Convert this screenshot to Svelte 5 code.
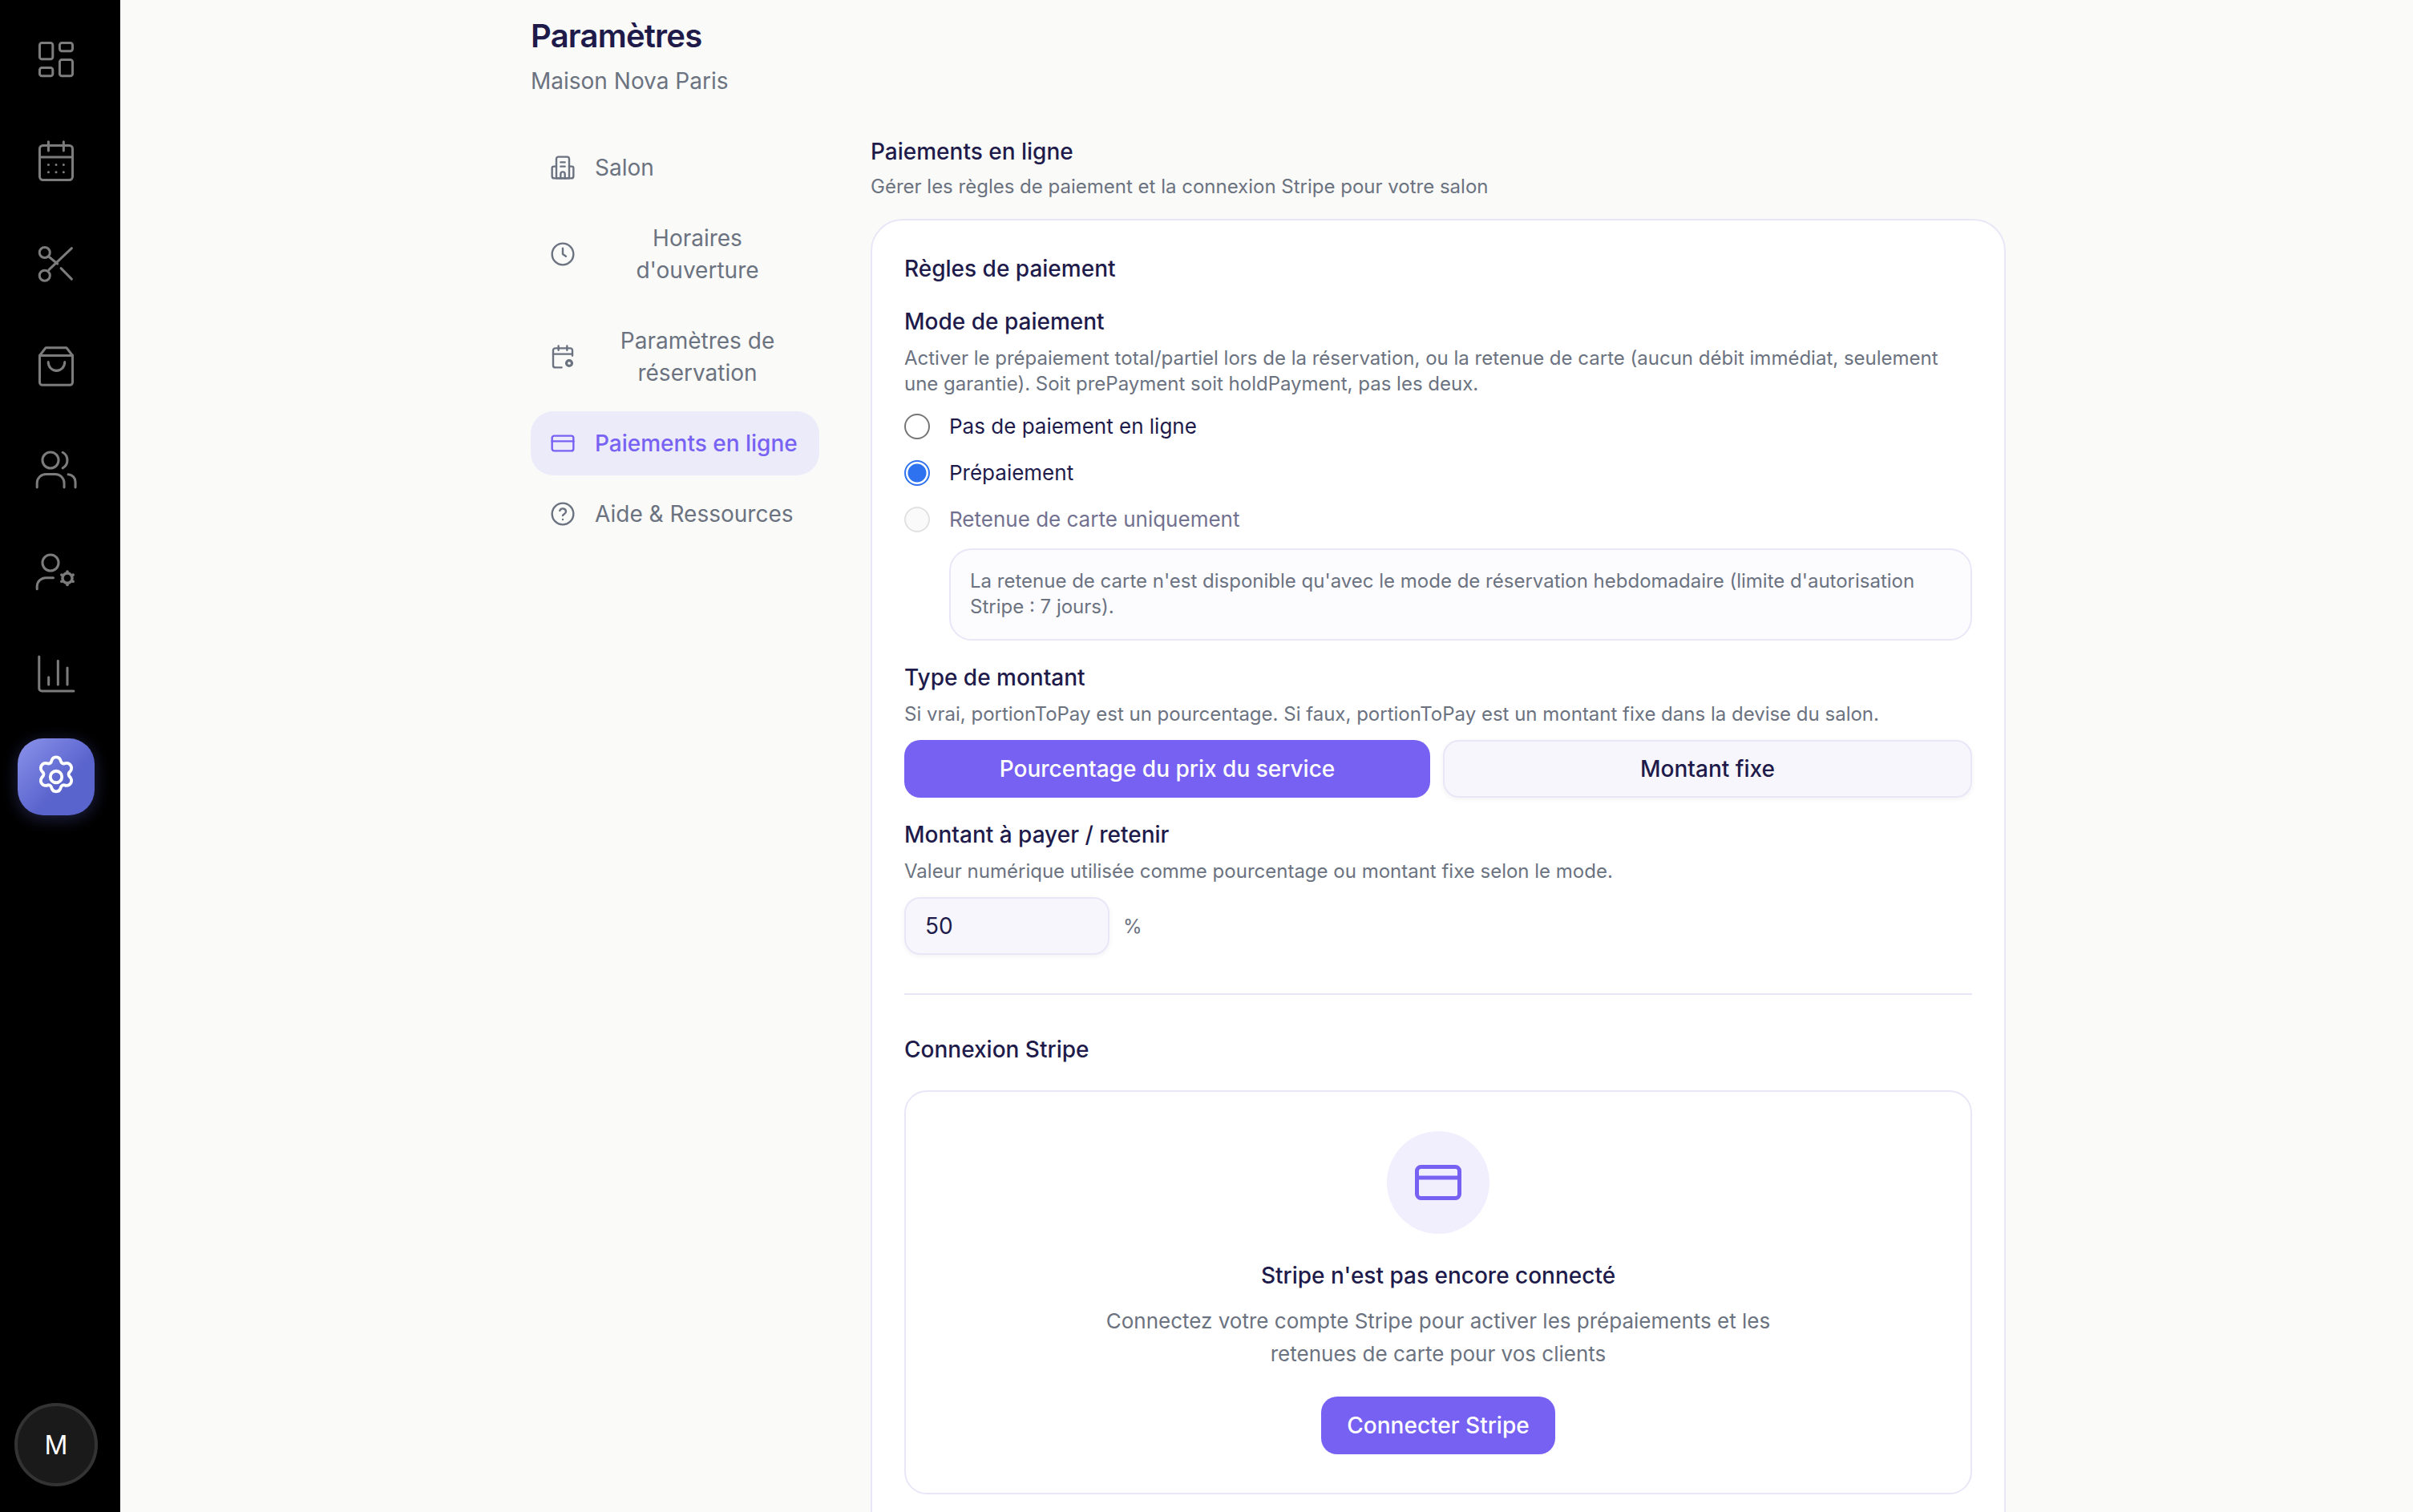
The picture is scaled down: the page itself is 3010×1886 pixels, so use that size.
<script>
  const railIcons = ["grid", "calendar", "scissors", "bag", "users", "usercog", "chart"];

  const navItems = [
    { id: "salon", label: "Salon" },
    { id: "clock", label: "Horaires d'ouverture" },
    { id: "calcog", label: "Paramètres de réservation" },
    { id: "card", label: "Paiements en ligne", active: true },
    { id: "help", label: "Aide & Ressources" }
  ];

  const radios = [
    { label: "Pas de paiement en ligne" },
    { label: "Prépaiement", checked: true },
    { label: "Retenue de carte uniquement", disabled: true }
  ];

  const cogAngles = [0, 60, 120, 180, 240, 300];
</script>

{#snippet railIcon(name)}
  <svg viewBox="0 0 24 24" width="56" height="56" fill="none" stroke="currentColor" stroke-width="1.3" stroke-linecap="round" stroke-linejoin="round">
    {#if name === "grid"}
      <rect x="3.2" y="3.6" width="7" height="8.7" rx="1.2" />
      <rect x="13.9" y="3.6" width="6.900" height="4.400" rx="1.2" />
      <rect x="3.2" y="16.900" width="7" height="4.400" rx="1.2" />
      <rect x="13.9" y="12.600" width="6.900" height="8.700" rx="1.2" />
    {:else if name === "calendar"}
      <rect x="3.2" y="3.600" width="17.600" height="18.500" rx="1.800" />
      <path d="M3.200 9.900h17.600M7.900 1.600v4.800M16 1.600v4.800" />
      <path d="M7.900 13.900h.01M12 13.900h.01M16 13.900h.01M7.900 17.900h.01M12 17.900h.01M16 17.900h.01" />
    {:else if name === "scissors"}
      <circle cx="5.900" cy="6" r="2.800" />
      <circle cx="5.900" cy="18.300" r="2.800" />
      <path d="M8.200 15.200 20.300 3.700M8.200 8.300l4.500 3.700M14.600 14.400l5.700 5.800" />
    {:else if name === "bag"}
      <path d="M3.200 6.200v14.300a1.500 1.500 0 0 0 1.500 1.500h14.600a1.500 1.500 0 0 0 1.500-1.500V6.200L17.500 2h-11z" />
      <path d="M3.200 6.200h17.600M7.800 9.700a4.400 4.600 0 0 0 8.800 0" />
    {:else if name === "users"}
      <circle cx="9" cy="7.300" r="4.300" />
      <path d="M1.800 21.800v-2.300a4.700 4.700 0 0 1 4.700-4.700h5.100a4.700 4.700 0 0 1 4.700 4.700v2.300M18.500 14.900a4 4 0 0 1 3.800 4v2.900M15.500 3.100a4.800 4.800 0 0 1 0 8.400" />
    {:else if name === "usercog"}
      <circle cx="9" cy="7.300" r="4.300" />
      <path d="M1.800 21.300v-1.600a4.700 4.700 0 0 1 4.700-4.400h4" />
      <circle cx="18" cy="15.500" r="2.600" stroke-width="1.500" />
      {#each cogAngles as a}
        <circle
          cx={18 + 3.500 * Math.cos(((a + 30) * Math.PI) / 180)}
          cy={15.500 + 3.500 * Math.sin(((a + 30) * Math.PI) / 180)}
          r="0.800"
          fill="currentColor"
          stroke="none"
        />
      {/each}
    {:else if name === "chart"}
      <path d="M2.900 2.600v17a1.400 1.400 0 0 0 1.400 1.400h17.100M8 13.600v4M13 4.800v12.800M18 8.600v9" />
    {/if}
  </svg>
{/snippet}

{#snippet navIcon(name)}
  <svg viewBox="0 0 24 24" width="32" height="32" fill="none" stroke="currentColor" stroke-width="1.800" stroke-linecap="round" stroke-linejoin="round">
    {#if name === "salon"}
      <path d="M6 22V4a2 2 0 0 1 2-2h8a2 2 0 0 1 2 2v18z" />
      <path d="M6 11H3.500A1.500 1.500 0 0 0 2 12.500V20a2 2 0 0 0 2 2h16a2 2 0 0 0 2-2v-7.500a1.500 1.500 0 0 0-1.500-1.500H18" />
      <path d="M10 7h4M10 11h4M10 22v-4a2 2 0 0 1 4 0v4" />
    {:else if name === "clock"}
      <circle cx="12" cy="12" r="10" />
      <path d="M12 6.500V12l3 2" />
    {:else if name === "calcog"}
      <path d="M21 11V6a2 2 0 0 0-2-2H5a2 2 0 0 0-2 2v14a2 2 0 0 0 2 2h6" />
      <path d="M3 9.500h18M8 1.800v4M16 1.800v4" />
      <circle cx="18" cy="18" r="2.600" stroke-width="2.400" />
    {:else if name === "card"}
      <rect x="2" y="5" width="20" height="14" rx="2" />
      <path d="M2 10h20" />
    {:else if name === "help"}
      <circle cx="12" cy="12" r="10" />
      <path d="M9.200 9a3 3 0 0 1 5.800 1c0 2-3 2.500-3 3.500M12 17.200h.01" />
    {/if}
  </svg>
{/snippet}

<div class="page">
  <aside class="rail">
    <nav class="rail-list">
      {#each railIcons as name}
        <div class="rail-item">{@render railIcon(name)}</div>
      {/each}
      <div class="rail-item on">
        <svg viewBox="0 0 24 24" width="58" height="58" fill="none" stroke="currentColor" stroke-width="1.600" stroke-linecap="round" stroke-linejoin="round">
          <path d="M12 1.800c1.300 0 2.200 1 2.500 2.300.2.800 1 1.200 1.800 1 1.300-.4 2.600 0 3.300 1.100.6 1.100.3 2.500-.7 3.400-.6.600-.6 1.600 0 2.200 1 .9 1.300 2.300.7 3.400-.7 1.100-2 1.500-3.300 1.100-.8-.2-1.600.2-1.800 1-.3 1.300-1.200 2.300-2.500 2.300s-2.200-1-2.500-2.300c-.2-.8-1-1.200-1.800-1-1.300.4-2.600 0-3.300-1.100-.6-1.100-.3-2.500.7-3.400.6-.6.600-1.600 0-2.200-1-.9-1.300-2.300-.7-3.400.7-1.100 2-1.500 3.300-1.100.8.200 1.600-.2 1.800-1 .3-1.300 1.200-2.300 2.500-2.300z" />
          <circle cx="12" cy="12" r="3" />
        </svg>
      </div>
    </nav>
    <div class="avatar">M</div>
  </aside>

  <main class="main">
    <header class="head">
      <h1>Paramètres</h1>
      <p>Maison Nova Paris</p>
    </header>

    <div class="columns">
      <nav class="side">
        {#each navItems as item}
          <div class="side-item" class:active={item.active}>
            {@render navIcon(item.id)}
            <span>{item.label}</span>
          </div>
        {/each}
      </nav>

      <section class="content">
        <h2>Paiements en ligne</h2>
        <p class="muted intro">Gérer les règles de paiement et la connexion Stripe pour votre salon</p>

        <div class="card">
          <h3 class="rules">Règles de paiement</h3>

          <h3 class="field">Mode de paiement</h3>
          <p class="muted">Activer le prépaiement total/partiel lors de la réservation, ou la retenue de carte (aucun débit immédiat, seulement une garantie). Soit prePayment soit holdPayment, pas les deux.</p>

          <div class="radios">
            {#each radios as radio}
              <label class="radio" class:disabled={radio.disabled}>
                <span class="dot" class:checked={radio.checked}></span>
                {radio.label}
              </label>
            {/each}
          </div>

          <div class="note">La retenue de carte n'est disponible qu'avec le mode de réservation hebdomadaire (limite d'autorisation Stripe : 7 jours).</div>

          <h3 class="field type">Type de montant</h3>
          <p class="muted">Si vrai, portionToPay est un pourcentage. Si faux, portionToPay est un montant fixe dans la devise du salon.</p>

          <div class="toggle">
            <button class="primary">Pourcentage du prix du service</button>
            <button class="ghost">Montant fixe</button>
          </div>

          <h3 class="field amount">Montant à payer / retenir</h3>
          <p class="muted">Valeur numérique utilisée comme pourcentage ou montant fixe selon le mode.</p>

          <div class="value">
            <div class="input">50</div>
            <span>%</span>
          </div>

          <hr />

          <h3 class="stripe-title">Connexion Stripe</h3>

          <div class="stripe">
            <div class="circle">
              <svg viewBox="0 0 58 44" width="58" height="44" fill="none" stroke="currentColor" stroke-width="5" stroke-linejoin="round">
                <rect x="2.500" y="2.500" width="53" height="39" rx="5" />
                <path d="M2.500 16h53" />
              </svg>
            </div>
            <h4>Stripe n'est pas encore connecté</h4>
            <p>Connectez votre compte Stripe pour activer les prépaiements et les retenues de carte pour vos clients</p>
            <button class="primary connect">Connecter Stripe</button>
          </div>
        </div>
      </section>
    </div>
  </main>
</div>

<style>
  :global(body) {
    margin: 0;
    background: #fafaf8;
  }

  .page {
    display: flex;
    height: 1886px;
    overflow: hidden;
    font-family: Inter, "Liberation Sans", sans-serif;
    color: #1e1b4b;
  }

  .rail {
    width: 150px;
    flex: none;
    background: #000;
    display: flex;
    flex-direction: column;
    align-items: center;
    justify-content: space-between;
    padding: 25px 10px 32px 0;
    box-sizing: border-box;
    color: #7c7c7c;
  }

  .rail-list {
    display: flex;
    flex-direction: column;
    align-items: center;
    gap: 32px;
  }

  .rail-item {
    width: 96px;
    height: 96px;
    display: flex;
    align-items: center;
    justify-content: center;
  }

  .rail-item.on {
    border-radius: 32px;
    color: #fff;
    background: linear-gradient(135deg, #8b93ea, #5a64cd 60%);
    box-shadow: 0 4px 20px rgba(110, 120, 240, 0.3);
  }

  .avatar {
    width: 104px;
    height: 104px;
    box-sizing: border-box;
    border-radius: 50%;
    border: 4px solid #333;
    background: #1a1a1a;
    color: #fff;
    font-size: 32px;
    font-weight: 400;
    display: flex;
    align-items: center;
    justify-content: center;
  }

  .main {
    flex: 1;
    padding: 20px 0 0 512px;
    min-width: 0;
  }

  h1, h2, h3, h4, p, hr {
    margin: 0;
  }

  .head h1 {
    font-size: 40px;
    line-height: 50px;
    font-weight: 600;
    letter-spacing: -0.8px;
  }

  .head p {
    margin-top: 11px;
    font-size: 28px;
    line-height: 40px;
    color: #6b7280;
  }

  .columns {
    display: flex;
    gap: 64px;
    margin-top: 48px;
    align-items: flex-start;
  }

  .side {
    width: 360px;
    flex: none;
    display: flex;
    flex-direction: column;
    gap: 8px;
  }

  .side-item {
    display: flex;
    align-items: center;
    gap: 24px;
    padding: 20px 24px;
    border-radius: 28px;
    font-size: 28px;
    line-height: 40px;
    color: #6b7280;
    text-align: center;
  }

  .side-item svg {
    flex: none;
  }

  .side-item.active {
    background: #ecebf9;
    color: #7762f3;
    font-weight: 500;
  }

  .content {
    width: 1416px;
    flex: none;
  }

  h2 {
    font-size: 28px;
    line-height: 40px;
    font-weight: 500;
  }

  .muted {
    font-size: 24px;
    line-height: 32px;
    color: #6b7280;
  }

  .intro {
    margin-top: 8px;
  }

  .card {
    margin-top: 24px;
    padding: 40px 40px 0;
    background: #fff;
    border: 2px solid #e9e7f7;
    border-radius: 40px;
    height: 1700px;
    box-sizing: border-box;
  }

  h3 {
    font-size: 28px;
    line-height: 40px;
    font-weight: 500;
  }

  .field {
    margin-top: 26px;
    margin-bottom: 10px;
  }

  .radios {
    display: flex;
    flex-direction: column;
    gap: 18px;
    margin-top: 17px;
  }

  .radio {
    display: flex;
    align-items: center;
    gap: 24px;
    height: 40px;
    font-size: 26px;
    line-height: 40px;
  }

  .radio.disabled {
    color: #72718f;
  }

  .dot {
    width: 32px;
    height: 32px;
    box-sizing: border-box;
    border-radius: 50%;
    border: 2.500px solid #767676;
    background: #fff;
  }

  .dot.checked {
    border-color: #2f72f0;
    background: radial-gradient(circle, #2f72f0 0 11px, #fff 12px);
  }

  .radio.disabled .dot {
    border-color: #e2e2e2;
    background: #fafafa;
  }

  .note {
    margin: 16px 0 0 56px;
    padding: 23px 24px 24px;
    border: 2px solid #e9e7f7;
    border-radius: 28px;
    background: #fcfcff;
    font-size: 24px;
    line-height: 32px;
    color: #6b7280;
  }

  .type {
    margin-top: 26px;
  }

  .toggle {
    display: flex;
    gap: 16px;
    margin-top: 16px;
  }

  button {
    font: inherit;
    height: 72px;
    border-radius: 20px;
    border: none;
    font-size: 28px;
    font-weight: 500;
    padding: 0;
  }

  .primary {
    background: #7761f3;
    color: #fff;
  }

  .toggle .primary {
    width: 656px;
    flex: none;
  }

  .ghost {
    flex: 1;
    background: #f7f6fc;
    color: #1e1b4b;
    border: 2px solid #e9e7f7;
    box-shadow: 0 2px 6px rgba(30, 27, 75, 0.06);
  }

  .amount {
    margin-top: 26px;
  }

  .value {
    display: flex;
    align-items: center;
    gap: 17px;
    margin-top: 16px;
    font-size: 24px;
    color: #6b7280;
  }

  .input {
    width: 256px;
    height: 72px;
    box-sizing: border-box;
    padding-left: 24px;
    display: flex;
    align-items: center;
    border: 2px solid #e9e7f7;
    border-radius: 20px;
    background: #f7f6fc;
    box-shadow: 0 2px 6px rgba(30, 27, 75, 0.06);
    color: #1e1b4b;
    font-size: 28px;
  }

  hr {
    border: none;
    border-top: 2px solid #e9e7f7;
    margin-top: 48px;
  }

  .stripe-title {
    margin-top: 48px;
  }

  .stripe {
    margin-top: 31px;
    height: 504px;
    box-sizing: border-box;
    border: 2px solid #e9e7f7;
    border-radius: 28px;
    display: flex;
    flex-direction: column;
    align-items: center;
    padding-top: 49px;
  }

  .circle {
    width: 128px;
    height: 128px;
    border-radius: 50%;
    background: #f1effd;
    color: #7761f3;
    display: flex;
    align-items: center;
    justify-content: center;
  }

  h4 {
    margin-top: 32px;
    font-size: 28px;
    line-height: 40px;
    font-weight: 500;
  }

  .stripe p {
    margin-top: 16px;
    width: 880px;
    text-align: center;
    font-size: 26px;
    line-height: 41px;
    color: #6b7280;
  }

  .connect {
    margin-top: 33px;
    padding: 0 32px;
  }
</style>
